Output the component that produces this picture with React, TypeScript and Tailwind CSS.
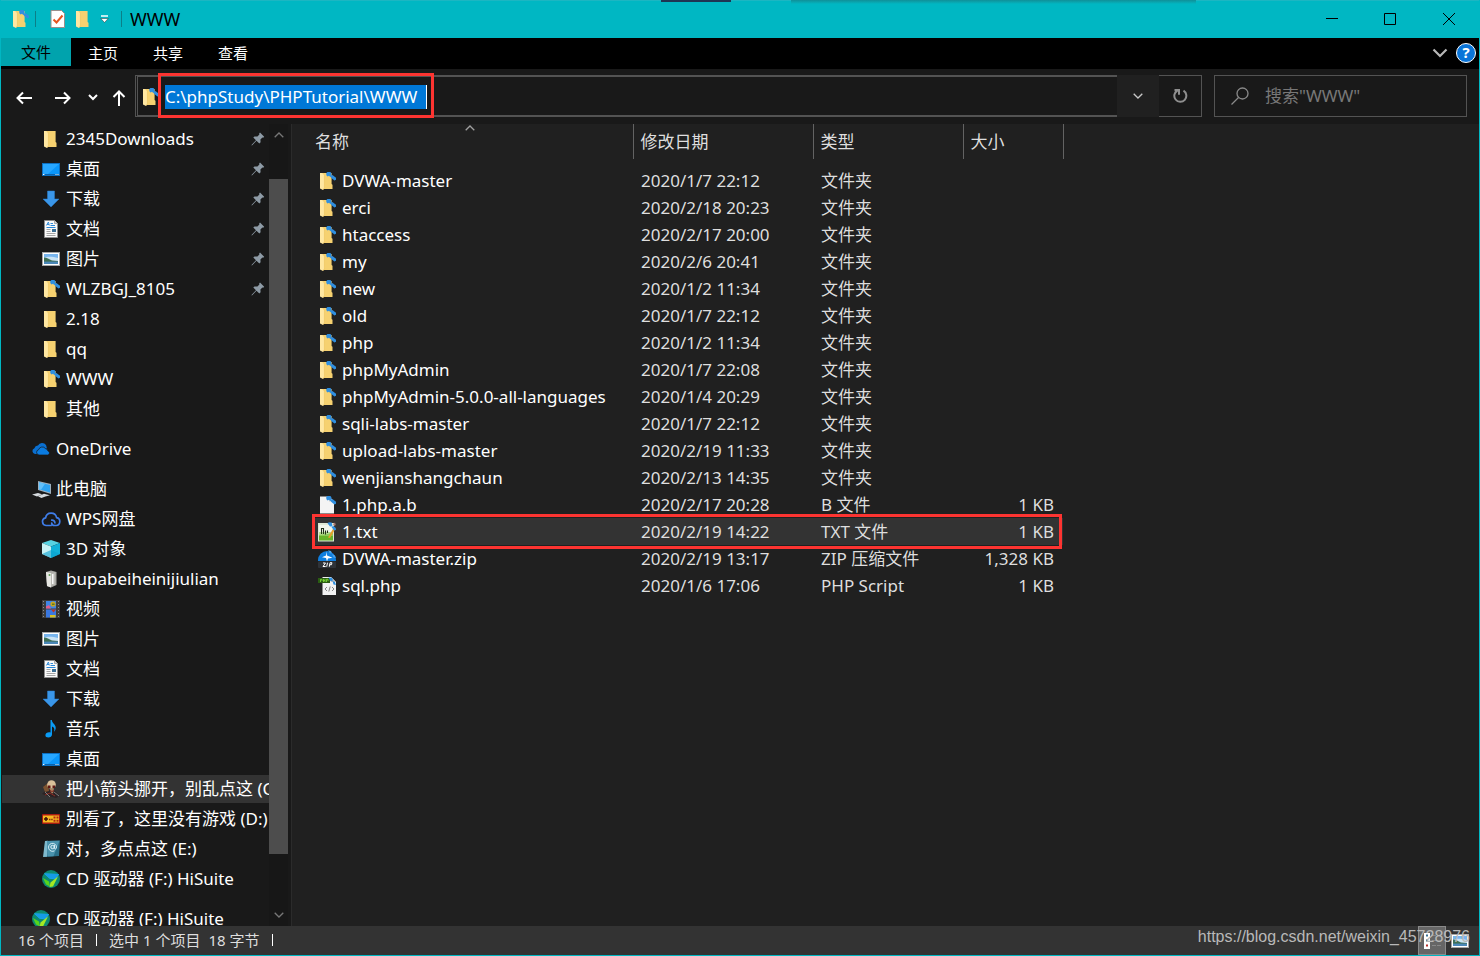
import { ReactNode } from 'react';

type IconProps = { className?: string };

// Blue sync arrows shown over a linked folder or file
function LinkOverlay() {
  return (
    <g fill="#2f8fe0">
      <path d="M8.2 1.2L9.400 0h3l1 1.200v3.200l-1.200.6-1.200-1.200-1.400.6-1.200-1.200z" />
      <path d="M12.800 4l1.600-1 3.600 2.800v2l-1.600.6-3.600-3z" />
    </g>
  );
}

function FolderIcon({ linked = false, className = '' }: IconProps & { linked?: boolean }) {
  return (
    <svg viewBox="0 0 18 18" className={`size-[18px] shrink-0 ${className}`}>
      <path d="M4 1h9.6v11l.9.8V17H4z" fill="#f6d170" />
      <path d="M2 1h2.6L6.4 3v12.8L5 18l-3-1.6z" fill="#ffe7a2" />
      <path d="M4.6 1L6.4 3v12.8L5 18" fill="none" stroke="#e9bd55" strokeWidth=".5" />
      {linked && <LinkOverlay />}
    </svg>
  );
}

function DesktopIcon() {
  return (
    <svg viewBox="0 0 18 18" className="size-[18px] shrink-0">
      <rect x="0" y="3" width="18" height="13" fill="#0d6fc0" />
      <rect x="1" y="4" width="16" height="11" fill="#0a96fa" />
      <path d="M1 4h16L6 14H1z" fill="#27a6ff" />
      <path d="M1 14h16v1H1z" fill="#0863ae" />
      <path d="M1 14h1.4v1H1zM13.5 14h1v1h-1zM15.5 14h1v1h-1z" fill="#fff" />
    </svg>
  );
}

function DownloadIcon() {
  return (
    <svg viewBox="0 0 18 18" className="size-[18px] shrink-0">
      <path d="M5.5 1h7v8H17l-8 8-8-8h4.5z" fill="#3a96e8" stroke="#2a7fcc" strokeWidth=".5" />
    </svg>
  );
}

function DocumentIcon() {
  return (
    <svg viewBox="0 0 18 18" className="size-[18px] shrink-0">
      <path d="M2.5.5h10l3 3v14h-13z" fill="#fafafa" stroke="#8c8c8c" />
      <path d="M12.5.5v3h3" fill="#d8d8d8" stroke="#8c8c8c" strokeWidth=".7" />
      <path d="M4.4 5.5L6.4 2l.9 3.5M5 4.5h2" fill="none" stroke="#2b88d8" strokeWidth=".9" />
      <path d="M8.5 3.5H11M8.5 5.5H13M4.5 7.5h9" stroke="#2b88d8" strokeWidth="1" />
      <path d="M4.5 9.5h4M4.5 11.5h4M4.5 13.5h9M4.5 15.5h9" stroke="#9a9a9a" strokeWidth=".9" />
      <rect x="10" y="9" width="4" height="3" fill="#3b6f94" />
    </svg>
  );
}

function PictureIcon({ className = '' }: IconProps) {
  return (
    <svg viewBox="0 0 18 18" className={`size-[18px] shrink-0 ${className}`}>
      <rect x=".5" y="2.5" width="17" height="13" fill="#fff" stroke="#a5a5a5" />
      <rect x="2" y="4" width="14" height="10" fill="#78b5ee" />
      <path d="M2 8c4-2 9-1 14 0v3H2z" fill="#c9e3f5" />
      <path d="M2 7.4c3 0 5 1.8 8 3l6 .6v1H2z" fill="#3f6f55" />
      <path d="M2 11.6h14V14H2z" fill="#4a87b8" />
    </svg>
  );
}

function OneDriveIcon() {
  return (
    <svg viewBox="0 0 18 18" className="size-[18px] shrink-0">
      <path
        d="M3 14a3 3 0 0 1-.6-5.8A3.6 3.6 0 0 1 6 5.600A4.600 4.600 0 0 1 14 5l1 3.500L9 9l-4 5z"
        fill="#0a6fd0"
      />
      <path
        d="M7 15a2.700 2.700 0 0 1-.4-5.300A3.900 3.900 0 0 1 13.500 8.600a3 3 0 0 1 2.400 2.300A2.100 2.100 0 0 1 15.900 15z"
        fill="#0a7be0"
        stroke="#191919"
        strokeWidth=".7"
      />
    </svg>
  );
}

function ComputerIcon() {
  return (
    <svg viewBox="0 0 20 18" className="-mr-0.5 h-[18px] w-5 shrink-0">
      <path d="M6 1l13 3v10L6 10z" fill="#9fb0bd" />
      <path d="M7 2.300l11 2.600v7.600L7 9.200z" fill="#2ea3f2" />
      <path d="M7 2.300l6 1.400L9 9.800l-2-.6z" fill="#62c0fb" />
      <path d="M0 14.500l6-1.500 4 1.200-5 2.300zM6 16.200l6-2.400 6 1.400-4.600 1.400-4 1.400z" fill="#d6dbdf" />
    </svg>
  );
}

function WpsCloudIcon() {
  return (
    <svg viewBox="0 0 20 18" className="-mx-px h-[18px] w-5 shrink-0">
      <g fill="none" stroke="#3f7de8" strokeWidth="1.700" strokeLinecap="round">
        <path d="M10 15.500H5A3.900 3.900 0 0 1 4.600 7.800a5.600 5.600 0 0 1 11-.2A4 4 0 0 1 15.200 15.500h-1.500c-2 0-3-1-3-2.500" />
        <path d="M10.700 10.200a2.700 2.700 0 0 1 3.200 2.600" />
      </g>
    </svg>
  );
}

function CubeIcon() {
  return (
    <svg viewBox="0 0 18 18" className="size-[18px] shrink-0">
      <path d="M9 0l9 3-9 3.500L0 3z" fill="#58d3e2" />
      <path d="M0 3l9 3.500V18l-9-4z" fill="#c9f2f5" />
      <path d="M18 3L9 6.500V18l9-4z" fill="#12b1d8" />
      <path d="M0 14l9-4 9 4-9 4z" fill="#0aa0cf" opacity=".6" />
    </svg>
  );
}

function TowerIcon() {
  return (
    <svg viewBox="0 0 18 18" className="size-[18px] shrink-0">
      <path d="M4 2l5-1.500L14.500 2v13L9 17.500 5 16z" fill="#a8a8a4" />
      <path d="M4 2l5 1v14.500L5 16z" fill="#e6e6e2" />
      <path d="M9 3l4-.8v12.600L9 16z" fill="#b9b9b4" />
      <path d="M10 4h1.500v10H10z" fill="#f7f7f7" />
      <circle cx="7.500" cy="5" r="1" fill="#5f9c56" />
    </svg>
  );
}

function VideoIcon() {
  return (
    <svg viewBox="0 0 18 18" className="size-[18px] shrink-0">
      <rect width="18" height="18" fill="#3c3c3c" />
      <path d="M1.500 1v17M16.500 1v17" stroke="#8c8c8c" strokeWidth="1" strokeDasharray="1 2" />
      <rect x="4" y="1" width="10" height="7.500" fill="#3f86e6" />
      <rect x="4" y="9.500" width="10" height="8" fill="#3a78e0" />
      <circle cx="11" cy="4" r="2.600" fill="#c9a41c" />
      <path d="M10 3.500h2.500v1.500H10z" fill="#5f7f22" />
      <path d="M4 6.500L7 5l2 3.500H4z" fill="#e05c8b" />
      <path d="M9 9.500h5l-2.500 3z" fill="#b8362d" />
      <path d="M8 15h5.500v2.500H8z" fill="#d9c022" />
    </svg>
  );
}

function MusicIcon() {
  return (
    <svg viewBox="0 0 18 18" className="size-[18px] shrink-0">
      <path
        d="M8.500 0h1.300c.3 3.600 4.400 4.200 3.900 8.600-.2 1.600-1 2.600-1.700 3.200.9-2.500.3-4.600-2-5.300v8c0 1.900-1.700 3-3.600 3-2 0-3-1-3-2.300 0-2 2.700-3.400 5.100-2.600z"
        fill="#0a9bf5"
      />
    </svg>
  );
}

function SkullIcon() {
  return (
    <svg viewBox="0 0 18 18" className="size-[18px] shrink-0">
      <path d="M0 14l4-4 9 1 5 5-4 2-8-2z" fill="#2c2224" />
      <path d="M1 7l5-4 1 8-4 1z" fill="#7d5330" />
      <circle cx="9.500" cy="4.500" r="4.300" fill="#d9c09a" />
      <path d="M6 5.500h2.500v2.500H6zM10.500 5.500H13v2.500h-2.500z" fill="#5f1713" />
      <path d="M7.500 8.500h4.500l-1 5-2-1z" fill="#a9825f" />
      <path d="M8 10.500l2 1 2-1M3 15l5-2 5 3" stroke="#8d2b22" fill="none" />
      <path d="M3 12l5 5M12 12l5 4" stroke="#7e7e7e" />
    </svg>
  );
}

function GamepadIcon() {
  return (
    <svg viewBox="0 0 18 18" className="size-[18px] shrink-0">
      <rect x="0" y="4" width="18" height="10" rx="1" fill="#a81a12" />
      <rect x="1" y="5.500" width="16" height="7" fill="#f5b920" />
      <path d="M2 9h4M4 7v4" stroke="#3b1208" strokeWidth="1.500" />
      <path d="M7 9.500h1.500M9.200 9.500h1.500" stroke="#8b2a10" strokeWidth="1.500" />
      <path d="M11.500 6.500h2v2h-2zM14.500 6.500h2v2h-2zM11.500 9.800h2v2h-2zM14.500 9.800h2v2h-2z" fill="#b02612" />
    </svg>
  );
}

function AddressBookIcon() {
  return (
    <svg viewBox="0 0 18 18" className="size-[18px] shrink-0">
      <path d="M3 1l15-.5L17 16l-15 1z" fill="#2a6f88" />
      <path d="M3 1l3-.2L5 16.800 1 17z" fill="#7fb9cc" />
      <path d="M5 1l12.500-.3-6 15.500-6 .4z" fill="#4a93ad" />
      <circle cx="10.500" cy="7" r="1.700" fill="none" stroke="#e3f5fa" />
      <path d="M12.500 5v3c0 1.600 2 1.400 2-1a4 4 0 1 0-2 3.800" fill="none" stroke="#e3f5fa" strokeWidth=".9" />
    </svg>
  );
}

function HiSuiteIcon() {
  return (
    <svg viewBox="0 0 18 18" className="size-[18px] shrink-0">
      <circle cx="9" cy="9" r="9" fill="#0d8a72" />
      <path d="M2 3.600L17 4l-3.500 5.500-6-1z" fill="#2ab4f5" />
      <path d="M2 3.600l5.500 5L13.500 9 17 4z" fill="#159be6" />
      <path d="M1 8l6 3.500L8 16.500l-4-2z" fill="#56d51c" />
      <path d="M16 6.500l-5 10-3.500.5 1-4.500z" fill="#a6ea22" />
    </svg>
  );
}

function BlankFileIcon() {
  return (
    <svg viewBox="0 0 18 18" className="size-[18px] shrink-0">
      <path d="M2 .5h9l5 5V17.500H2z" fill="#f4f4f4" />
      <path d="M11 .5v5h5" fill="#cfcfcf" />
      <LinkOverlay />
    </svg>
  );
}

function TextFileIcon() {
  return (
    <svg viewBox="0 0 18 20" className="h-5 w-[18px] shrink-0">
      <path d="M0 1h16v18.500H0z" fill="#dfe9d6" />
      <path d="M1 9h14v9.500H1z" fill="#67b32a" />
      <path d="M1 3h14v7c-5 3-9 2-14 3z" fill="#f2f7ec" />
      <path d="M1 10h14v4H1z" fill="#9fd36e" opacity=".7" />
      <path d="M3.500 12V6.500h2V12M7.500 8.500v4M9.500 8.500v2.500" fill="none" stroke="#20301a" strokeWidth="1.100" />
      <path d="M10 15.500L15.500 6l1.800.8L12 16z" fill="#e6a12c" />
      <path d="M9.500 1.200L11 .2l2.700.2.800 3.800-2.500.4zM13.500 5l2-1 2.300 2 .2 2-2 .4z" fill="#2f8fe0" />
      <path d="M15 2l2-1.500.8 2.500-1.800 1z" fill="#a8766c" />
    </svg>
  );
}

function ZipIcon() {
  return (
    <svg viewBox="0 0 18 18" className="size-[18px] shrink-0">
      <path d="M0 10a9 9 0 0 1 18 0v1H0z" fill="#0f7fe0" />
      <path d="M9 1.500v4l5.500 2.300-4.500.7-1 3-1-3.500-4-.8L8 5.500z" fill="#fff" />
      <rect x="0" y="11.500" width="18" height="6.500" rx="1" fill="#2f3338" />
      <path d="M5 13h2.500L5 16.500h2.700M9.500 12.700l-.8 4M11.300 16.700l.8-4h1.800l-.4 2h-1.800" fill="none" stroke="#fff" />
      <path d="M10 .3l3 .6 1 2.500-2.200-.2zM14 4l3 1.500.8 2.500-2.300-.6z" fill="#4aa2ea" />
    </svg>
  );
}

function PhpFileIcon() {
  return (
    <svg viewBox="0 0 18 18" className="size-[18px] shrink-0">
      <path d="M4.500 0H13l5 5v13H4.500z" fill="#f2f2f2" />
      <path d="M13 0v5h5" fill="#bdbdbd" />
      <rect x="0" y="1" width="12" height="5" fill="#2a5d12" />
      <path d="M2.500 5V2.300H4V4M5.500 2v3M7 2v3M5.500 3.500H7M8.500 5V2.300H10V4" fill="none" stroke="#84e03a" strokeWidth=".8" />
      <path d="M9 10l-2 2 2 2M14 10l2 2-2 2M12.200 9.500l-1.400 5" fill="none" stroke="#777" strokeWidth=".9" />
      <path d="M10.500.5l3.500.3 1 2.800-2.500.6zM14.500 4l2.500 1 .9 3-2.400-.4z" fill="#2f8fe0" />
    </svg>
  );
}

function PinIcon() {
  return (
    <svg viewBox="0 0 14 14" className="size-3.5 shrink-0">
      <path d="M9 .6l4.200 4.200-1 .9-.8-.2-2 2 .2 2.800-1.300 1.200L5.500 8.800 1.200 13.200.5 13.500l.2-.8L5 8.300 2.300 5.500l1.200-1.100 2.900.1 2-2L8.200 1.500z" fill="#8e9ba6" />
    </svg>
  );
}

function Chevron({ up = false, className = '' }: IconProps & { up?: boolean }) {
  return (
    <svg viewBox="0 0 10 6" className={className} fill="none" stroke="currentColor" strokeWidth="1.300">
      <path d={up ? 'M.7 5.300L5 1l4.300 4.300' : 'M.7.7L5 5 9.300.7'} />
    </svg>
  );
}

type NavItem = { label: string; icon: ReactNode; pinned?: boolean; current?: boolean; root?: boolean };

const quickAccess: NavItem[] = [
  { label: '2345Downloads', icon: <FolderIcon />, pinned: true },
  { label: '桌面', icon: <DesktopIcon />, pinned: true },
  { label: '下载', icon: <DownloadIcon />, pinned: true },
  { label: '文档', icon: <DocumentIcon />, pinned: true },
  { label: '图片', icon: <PictureIcon />, pinned: true },
  { label: 'WLZBGJ_8105', icon: <FolderIcon linked />, pinned: true },
  { label: '2.18', icon: <FolderIcon /> },
  { label: 'qq', icon: <FolderIcon /> },
  { label: 'WWW', icon: <FolderIcon linked /> },
  { label: '其他', icon: <FolderIcon /> },
];

const thisPc: NavItem[] = [
  { label: '此电脑', icon: <ComputerIcon />, root: true },
  { label: 'WPS网盘', icon: <WpsCloudIcon /> },
  { label: '3D 对象', icon: <CubeIcon /> },
  { label: 'bupabeiheinijiulian', icon: <TowerIcon /> },
  { label: '视频', icon: <VideoIcon /> },
  { label: '图片', icon: <PictureIcon /> },
  { label: '文档', icon: <DocumentIcon /> },
  { label: '下载', icon: <DownloadIcon /> },
  { label: '音乐', icon: <MusicIcon /> },
  { label: '桌面', icon: <DesktopIcon /> },
  { label: '把小箭头挪开，别乱点这 (C:)', icon: <SkullIcon />, current: true },
  { label: '别看了，这里没有游戏 (D:)', icon: <GamepadIcon /> },
  { label: '对，多点点这 (E:)', icon: <AddressBookIcon /> },
  { label: 'CD 驱动器 (F:) HiSuite', icon: <HiSuiteIcon /> },
];

const navGroups: NavItem[][] = [
  quickAccess,
  [{ label: 'OneDrive', icon: <OneDriveIcon />, root: true }],
  thisPc,
  [{ label: 'CD 驱动器 (F:) HiSuite', icon: <HiSuiteIcon />, root: true }],
];

type FileRow = { name: string; date: string; type: string; size?: string; icon?: ReactNode; selected?: boolean };

const files: FileRow[] = [
  { name: 'DVWA-master', date: '2020/1/7 22:12', type: '文件夹' },
  { name: 'erci', date: '2020/2/18 20:23', type: '文件夹' },
  { name: 'htaccess', date: '2020/2/17 20:00', type: '文件夹' },
  { name: 'my', date: '2020/2/6 20:41', type: '文件夹' },
  { name: 'new', date: '2020/1/2 11:34', type: '文件夹' },
  { name: 'old', date: '2020/1/7 22:12', type: '文件夹' },
  { name: 'php', date: '2020/1/2 11:34', type: '文件夹' },
  { name: 'phpMyAdmin', date: '2020/1/7 22:08', type: '文件夹' },
  { name: 'phpMyAdmin-5.0.0-all-languages', date: '2020/1/4 20:29', type: '文件夹' },
  { name: 'sqli-labs-master', date: '2020/1/7 22:12', type: '文件夹' },
  { name: 'upload-labs-master', date: '2020/2/19 11:33', type: '文件夹' },
  { name: 'wenjianshangchaun', date: '2020/2/13 14:35', type: '文件夹' },
  { name: '1.php.a.b', date: '2020/2/17 20:28', type: 'B 文件', size: '1 KB', icon: <BlankFileIcon /> },
  { name: '1.txt', date: '2020/2/19 14:22', type: 'TXT 文件', size: '1 KB', icon: <TextFileIcon />, selected: true },
  { name: 'DVWA-master.zip', date: '2020/2/19 13:17', type: 'ZIP 压缩文件', size: '1,328 KB', icon: <ZipIcon /> },
  { name: 'sql.php', date: '2020/1/6 17:06', type: 'PHP Script', size: '1 KB', icon: <PhpFileIcon /> },
];

function TitleBar() {
  return (
    <header className="relative flex h-[38px] shrink-0 items-center border-t border-[#1cb6c2] bg-[#00b7c3] pb-0.5 pl-2.5 text-black">
      {/* Edges of the windows behind */}
      <div className="absolute -top-px left-[660px] h-0.5 w-[70px] bg-[#1f3553]" />
      <div className="absolute -top-px left-[790px] h-1 w-[405px] bg-linear-to-b from-[#0f9098] to-[#00b7c3]" />

      <FolderIcon linked />
      <span className="ml-1.5 h-4 w-px bg-[#0b7f88]" />
      <button aria-label="属性" className="ml-3.5">
        <svg viewBox="0 0 16 18" className="h-[18px] w-4">
          <path d="M1 .5h10.500L14.500 3.500v14H1z" fill="#fff" stroke="#9a8f8c" />
          <path d="M3.500 9.500l3 3 6-7" fill="none" stroke="#e8541e" strokeWidth="2" />
        </svg>
      </button>
      <button aria-label="新建文件夹" className="ml-2">
        <FolderIcon />
      </button>
      <button aria-label="自定义快速访问工具栏" className="ml-2">
        <svg viewBox="0 0 9 8" className="h-2 w-[9px]">
          <path d="M1 1h7" stroke="#fff" strokeWidth="1.500" />
          <path d="M.8 3.500h7.400L4.500 7.500z" fill="#fff" stroke="#333" strokeWidth=".5" />
        </svg>
      </button>
      <span className="ml-3 h-4 w-px bg-[#0b7f88]" />
      <h1 className="ml-2 text-[18px] leading-6">WWW</h1>

      <div className="ml-auto flex">
        <button aria-label="最小化" className="flex w-[58px] justify-center">
          <svg viewBox="0 0 12 12" className="size-3" stroke="#000">
            <path d="M0 5.500h12" />
          </svg>
        </button>
        <button aria-label="最大化" className="flex w-[58px] justify-center">
          <svg viewBox="0 0 12 12" className="size-3" fill="none" stroke="#000">
            <path d="M.5.5h11v11H.5z" />
          </svg>
        </button>
        <button aria-label="关闭" className="flex w-[60px] justify-center">
          <svg viewBox="0 0 12 12" className="size-3" stroke="#000">
            <path d="M0 0l12 12M12 0L0 12" />
          </svg>
        </button>
      </div>
    </header>
  );
}

function Ribbon() {
  return (
    <nav className="flex h-[31px] shrink-0 items-start bg-black text-[15px] leading-7">
      <button className="h-7 w-[70px] bg-[#00a3ad] text-black">文件</button>
      <div className="flex h-[29px] items-center gap-[35px] pl-[17px]">
        <button>主页</button>
        <button>共享</button>
        <button>查看</button>
      </div>
      <div className="ml-auto flex h-[29px] items-center gap-2 pr-[3px]">
        <button aria-label="展开功能区" className="text-[#b8b8b8]">
          <svg viewBox="0 0 16 10" className="h-2.5 w-4" fill="none" stroke="currentColor" strokeWidth="2.200">
            <path d="M1.500 1.500L8 8l6.500-6.500" />
          </svg>
        </button>
        <button
          aria-label="帮助"
          className="flex size-5 items-center justify-center rounded-full border border-white bg-[#0a74d8] text-[15px] leading-none font-bold"
        >
          ?
        </button>
      </div>
    </nav>
  );
}

function AddressBar() {
  return (
    <div className="flex h-[55px] shrink-0 items-center bg-[#191919] pt-px pr-3 pb-[3px]">
      <div className="flex items-center pt-1 pl-[15px]">
        <button aria-label="后退">
          <svg viewBox="0 0 16 14" className="h-3.5 w-4" fill="none" stroke="#fff" strokeWidth="2">
            <path d="M16 7H1.500M7 1.500L1.500 7 7 12.500" />
          </svg>
        </button>
        <button aria-label="前进" className="ml-[23px]">
          <svg viewBox="0 0 16 14" className="h-3.5 w-4" fill="none" stroke="#fff" strokeWidth="2">
            <path d="M0 7h14.500M9 1.500L14.500 7 9 12.500" />
          </svg>
        </button>
        <button aria-label="最近浏览的位置" className="ml-[17px]">
          <svg viewBox="0 0 10 7" className="h-[7px] w-2.5" fill="none" stroke="#fff" strokeWidth="2">
            <path d="M1 1l4 4 4-4" />
          </svg>
        </button>
        <button aria-label="上移" className="ml-[14px]">
          <svg viewBox="0 0 14 16" className="h-4 w-3.5" fill="none" stroke="#fff" strokeWidth="2">
            <path d="M7 16V1.500M1.500 7L7 1.500 12.500 7" />
          </svg>
        </button>
      </div>

      <div className="ml-[9px] flex h-[42px] min-w-0 flex-1 items-center border-y-2 border-l-3 border-double border-[#535353] pt-0.5 pl-[3px]">
        <FolderIcon linked />
        {/* Highlighted path */}
        <div className="relative ml-[6px] flex">
          <input
            type="text"
            aria-label="地址"
            defaultValue="C:\phpStudy\PHPTutorial\WWW"
            className="field-sizing-content h-6 min-w-[262px] border-r border-white bg-[#0078d7] text-[17px] leading-6 text-white outline-none"
          />
          <div className="pointer-events-none absolute -inset-x-[7px] -top-3 -bottom-[9px] border-3 border-[#fd3431]" />
        </div>
      </div>
      <button aria-label="以前的位置" className="flex h-[42px] w-[42px] items-center justify-center bg-[#202020] text-[#c8c8c8]">
        <Chevron className="h-1.5 w-2.5" />
      </button>
      <button
        aria-label="刷新"
        className="flex h-[42px] w-[43px] items-center justify-center border border-l-0 border-[#535353] pl-0.5"
      >
        <svg viewBox="0 0 16 16" className="size-4" fill="none" stroke="#8f8f8f" strokeWidth="2">
          <path d="M10.500 2.700a6 6 0 1 1-6-.2" />
          <path d="M1.500 2h4.500v4.800" />
        </svg>
      </button>

      <div className="ml-3 flex h-[42px] w-[253px] items-center border border-[#535353] pl-4">
        <svg viewBox="0 0 18 18" className="size-[18px] shrink-0" fill="none" stroke="#8a8a8a" strokeWidth="1.300">
          <circle cx="11.500" cy="6.500" r="5.500" />
          <path d="M7.500 10.500L.5 17.500" />
        </svg>
        <input
          type="search"
          aria-label="搜索"
          placeholder={'搜索"WWW"'}
          className="ml-4 w-40 text-[17px] leading-6 outline-none placeholder:text-[#777]"
        />
      </div>
    </div>
  );
}

function Sidebar() {
  return (
    <aside className="flex w-[291px] shrink-0 border-r border-[#2b2b2b] bg-[#191919]">
      <div className="flex min-w-0 flex-1 flex-col gap-2.5 overflow-hidden">
        {navGroups.map((group, i) => (
          <ul key={i} className="shrink-0">
            {group.map((item) => (
              <li key={item.label} className="py-px pl-px">
                <a
                  href="#"
                  className={`flex h-7 items-center gap-1.5 overflow-hidden pr-1 whitespace-nowrap ${
                    item.root ? 'pl-[30px]' : 'pl-10'
                  } ${item.current ? 'bg-[#333]' : ''}`}
                >
                  {item.icon}
                  <span>{item.label}</span>
                  {item.pinned && (
                    <span className="ml-auto">
                      <PinIcon />
                    </span>
                  )}
                </a>
              </li>
            ))}
          </ul>
        ))}
      </div>
      <div className="mr-[3px] flex w-[19px] flex-col bg-[#171717] text-[#777]">
        <button aria-label="向上滚动" className="flex h-[22px] items-center justify-center">
          <Chevron up className="h-1.5 w-2.5" />
        </button>
        <div className="mt-[33px] mb-[50px] flex-1 bg-[#4d4d4d]" />
        <button aria-label="向下滚动" className="flex h-[22px] items-center justify-center">
          <Chevron className="h-1.5 w-2.5" />
        </button>
      </div>
    </aside>
  );
}

function FileTable() {
  return (
    <main className="min-w-0 flex-1 overflow-hidden bg-[#202020] pl-5">
      <table className="w-[751px] table-fixed border-collapse text-left whitespace-nowrap">
        <colgroup>
          <col className="w-[321px]" />
          <col className="w-[180px]" />
          <col className="w-[150px]" />
          <col className="w-[100px]" />
        </colgroup>
        <thead>
          <tr className="h-[35px] text-[#dedede]">
            <th className="relative border-r border-[#636363] pl-[3px] font-normal">
              名称
              <Chevron up className="absolute top-px left-[153px] h-1.5 w-2.5 text-[#a0a0a0]" />
            </th>
            <th className="border-r border-[#636363] pl-[7px] font-normal">修改日期</th>
            <th className="border-r border-[#636363] pl-[7px] font-normal">类型</th>
            <th className="border-r border-[#636363] pl-[7px] font-normal">大小</th>
          </tr>
        </thead>
        <tbody className="before:block before:h-2">
          {files.map((file) => (
            <tr key={file.name} className={`relative h-[27px] text-[#dedede] ${file.selected ? 'bg-[#333]' : ''}`}>
              <td className="p-0 pl-1.5 text-white">
                <div className="flex h-[27px] items-center gap-1.5">
                  {file.icon ?? <FolderIcon linked />}
                  {file.name}
                </div>
                {file.selected && (
                  <div className="pointer-events-none absolute -top-1 right-px -bottom-1 left-0 border-3 border-[#fd3431]" />
                )}
              </td>
              <td className="p-0 pl-2">{file.date}</td>
              <td className="p-0 pl-2">{file.type}</td>
              <td className="p-0 pr-[9px] text-right">{file.size}</td>
            </tr>
          ))}
        </tbody>
      </table>
    </main>
  );
}

function StatusBar() {
  return (
    <footer className="relative flex h-[29px] shrink-0 items-center bg-[#333] text-[15px] leading-6 text-[#dedede]">
      <div className="flex items-center pb-0.5 pl-[17px]">
        <span>16 个项目</span>
        <span className="mx-3 h-3 w-px bg-white" />
        <span>选中 1 个项目</span>
        <span className="ml-2">18 字节</span>
        <span className="ml-3 h-3 w-px bg-white" />
      </div>
      <div className="ml-auto flex h-full items-center pr-2.5">
        <button aria-label="详细信息" className="flex h-[29px] w-7 items-center border border-[#8a8a8a] bg-[#666] pl-[5px]">
          <svg viewBox="0 0 18 16" className="h-4 w-[18px]">
            <path d="M0 0h6v16H0z" fill="#fff" />
            <path d="M2 1.500h2v2H2z" fill="#3b6f94" />
            <path d="M2 6.500h2v2H2z" fill="#444" />
            <path d="M2 11.500h2v2H2z" fill="#b5302a" />
            <path d="M8 2.500h4M13 2.500h4M8 7.500h4M13 7.500h4M8 12.500h4M13 12.500h4" stroke="#888" />
          </svg>
        </button>
        <button aria-label="大缩略图" className="ml-[5px]">
          <PictureIcon />
        </button>
      </div>
      <span className="pointer-events-none absolute right-[9px] bottom-2 font-['Liberation_Sans',sans-serif] text-base leading-5 text-[#b9b9b9]">
        https://blog.csdn.net/weixin_45728976
      </span>
    </footer>
  );
}

export default function App() {
  return (
    <div className="flex h-screen flex-col overflow-hidden border-x border-b border-[#00b7c3] bg-[#191919] font-['Noto_Sans','Noto_Sans_CJK_SC',sans-serif] text-[17px] leading-6 text-white">
      <TitleBar />
      <Ribbon />
      <AddressBar />
      <div className="flex min-h-0 flex-1">
        <Sidebar />
        <FileTable />
      </div>
      <StatusBar />
    </div>
  );
}
